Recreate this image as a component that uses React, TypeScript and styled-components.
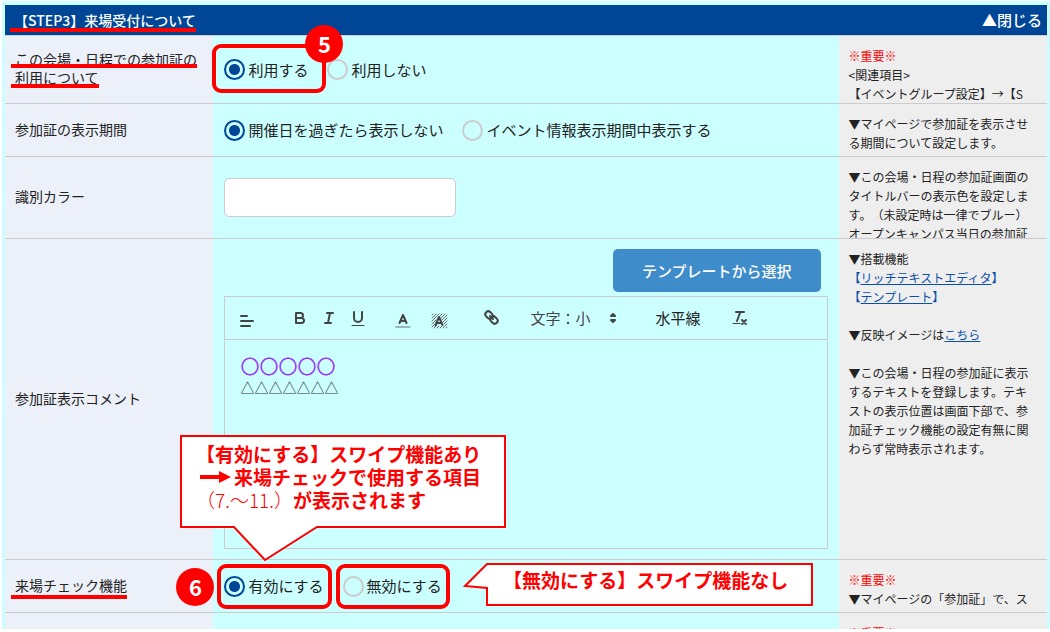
import React from 'react';
import styled, { createGlobalStyle, css } from 'styled-components';

const RED = '#ff0000';
const NAVY = '#004696';
const LINE = '#cccccc';

const GlobalStyle = createGlobalStyle`
  *, *::before, *::after { box-sizing: border-box; }
  body {
    margin: 0;
    background: #fff;
    color: #222;
    font-family: "Noto Sans CJK JP", "Noto Sans", sans-serif;
    text-spacing-trim: space-all;
  }
`;

const Page = styled.main`
  margin: 1px 0 3px 2px;
  padding: 4px 3px 0;
  background: #ccffff;
`;

const StepHeader = styled.header`
  display: flex;
  align-items: center;
  justify-content: space-between;
  height: 31px;
  padding: 0 5px 0 9px;
  background: ${NAVY};
  border-bottom: 1px solid ${LINE};
  color: #fff;
`;

const StepTitle = styled.h2`
  margin: 0;
  font-size: 14px;
  font-weight: 500;
  line-height: 18px;
`;

const CloseButton = styled.button`
  padding: 0;
  border: 0;
  background: none;
  color: #fff;
  font: 500 15px/18px "Noto Sans CJK JP", sans-serif;
`;

const Row = styled.section<{ $size: number }>`
  display: grid;
  grid-template-columns: 20% 60% 20%;
  min-height: ${(p) => p.$size}px;
  border-bottom: 1px solid ${LINE};
`;

const LastRow = styled(Row)`
  border-bottom: 0;
`;

const Label = styled.div`
  display: flex;
  flex-direction: column;
  align-items: flex-start;
  justify-content: center;
  padding: 0 10px 3px;
  background: #ecf0f9;
  font-size: 14px;
  line-height: 18px;
`;

const Field = styled.div`
  display: flex;
  align-items: center;
  gap: 19px;
  padding: 0 11px;
`;

const EditorField = styled.div`
  display: flex;
  flex-direction: column;
  gap: 4px;
  padding: 10px 11px;
`;

const Note = styled.aside`
  contain: size;
  overflow: hidden;
  padding: 10px 10px 0;
  background: #eee;
  font-size: 12px;
  line-height: 19px;

  p { margin: 0; }
  p + p { margin-top: 19px; }
  a { color: #0b4fa8; }
`;

const Important = styled.span`
  color: ${RED};
`;

const LinkBracket = styled.span`
  color: #0b4fa8;
`;

const Underlined = styled.span<{ $drop: number }>`
  position: relative;
  white-space: nowrap;

  &::after {
    content: "";
    position: absolute;
    left: -4px;
    right: 0;
    bottom: -${(p) => p.$drop}px;
    height: 4px;
    background: ${RED};
  }
`;

const Option = styled.label`
  position: relative;
  display: flex;
  align-items: center;
  gap: 3px;
  font-size: 15px;
  line-height: 22px;
  white-space: nowrap;
`;

const Radio = styled.input.attrs({ type: 'radio' })`
  appearance: none;
  width: 21px;
  height: 21px;
  margin: 0;
  border: 2px solid ${LINE};
  border-radius: 50%;

  &:checked {
    border-color: ${NAVY};
    background: radial-gradient(circle, ${NAVY} 5px, transparent 6px);
  }
`;

const Highlight = styled.span<{ $wide?: boolean }>`
  position: absolute;
  border: 4px solid ${RED};
  border-radius: 9px;
  pointer-events: none;
  inset: ${(p) => (p.$wide ? '-15px -18px -12px -12px' : '-11px -8px -12px -7px')};
`;

const badge = css`
  position: absolute;
  display: grid;
  place-items: center;
  width: 38px;
  height: 38px;
  padding-bottom: 2px;
  border-radius: 50%;
  background: ${RED};
  color: #fff;
  font: 700 22px/22px "Noto Sans CJK JP", sans-serif;
`;

const CornerBadge = styled.span`
  ${badge}
  top: -34px;
  right: -35px;
  z-index: 1;
`;

const SideBadge = styled.span`
  ${badge}
  top: -7px;
  left: -48px;
`;

const ColorInput = styled.input`
  width: 232px;
  height: 39px;
  border: 1px solid ${LINE};
  border-radius: 5px;
  background: #fff;
`;

const TemplateButton = styled.button`
  align-self: flex-end;
  height: 43px;
  margin-right: 7px;
  padding: 0 29px;
  border: 0;
  border-radius: 5px;
  background: #3f8ccb;
  color: #fff;
  font: 500 15px/22px "Noto Sans CJK JP", sans-serif;
`;

const Editor = styled.div`
  height: 253px;
  border: 1px solid ${LINE};
`;

const Toolbar = styled.div`
  display: flex;
  align-items: center;
  height: 43px;
  padding: 0 13px;
  border-bottom: 1px solid ${LINE};
`;

const ToolGroup = styled.div<{ $gap?: number; $after: number }>`
  display: flex;
  align-items: center;
  gap: ${(p) => p.$gap ?? 0}px;
  margin-right: ${(p) => p.$after}px;
`;

const Tool = styled.button`
  display: flex;
  align-items: center;
  padding: 0;
  border: 0;
  background: none;
  color: #222;
  font: 400 15px/22px "Noto Sans CJK JP", sans-serif;
`;

const SizeTool = styled(Tool)`
  gap: 14px;
  color: #444;
`;

const Icon = styled.svg.attrs({ width: 18, height: 18, viewBox: '0 0 18 18' })`
  display: block;
  overflow: visible;
  fill: none;
  stroke: #444;
  stroke-width: 2;
  stroke-linecap: round;
  stroke-linejoin: round;
`;

const EditorBody = styled.div`
  padding: 14px 15px;
`;

const Circles = styled.p`
  margin: 0;
  color: #9933ff;
  font-size: 19px;
  line-height: 24px;
`;

const Triangles = styled.p`
  margin: 0;
  color: #333;
  font-size: 14px;
  line-height: 19px;
`;

const Overlay = styled.div`
  position: relative;
  z-index: 1;
  height: 0;
`;

const calloutText = css`
  position: absolute;
  color: ${RED};
  font-size: 19px;
  font-weight: 700;
  line-height: 23px;
  white-space: nowrap;

  p { margin: 0; }
`;

const EnableCallout = styled.div`
  ${calloutText}
  left: 175px;
  top: -125px;
  width: 326px;
  height: 127px;
  padding: 7px 0 0 16px;
`;

const DisableCallout = styled.div`
  ${calloutText}
  left: 456px;
  top: 2px;
  width: 352px;
  height: 44px;
  padding: 6px 0 0 42px;
`;

const Balloon = styled.svg`
  position: absolute;
  inset: 0;
  z-index: -1;
  overflow: visible;
  fill: #fff;
  stroke: ${RED};
  stroke-width: 2;
`;

const ArrowLine = styled.p`
  display: flex;
  align-items: center;
  gap: 3px;
  padding-left: 4px;
`;

const Thin = styled.span`
  font-weight: 300;
`;

function Choice(props: {
  name: string;
  text: string;
  checked?: boolean;
  children?: React.ReactNode;
}) {
  return (
    <Option>
      <Radio name={props.name} defaultChecked={props.checked} />
      {props.text}
      {props.children}
    </Option>
  );
}

export default function App() {
  return (
    <>
      <GlobalStyle />
      <Page>
        <StepHeader>
          <StepTitle>
            <Underlined $drop={2}>【STEP3】来場受付について</Underlined>
          </StepTitle>
          <CloseButton type="button">▲閉じる</CloseButton>
        </StepHeader>

        <Row $size={68}>
          <Label>
            <Underlined $drop={0}>この会場・日程での参加証の</Underlined>
            <Underlined $drop={2}>利用について</Underlined>
          </Label>
          <Field>
            <Choice name="use" text="利用する" checked>
              <Highlight $wide />
              <CornerBadge>5</CornerBadge>
            </Choice>
            <Choice name="use" text="利用しない" />
          </Field>
          <Note>
            <p>
              <Important>※重要※</Important>
              <br />
              &lt;関連項目&gt;
              <br />
              【イベントグループ設定】→【S
            </p>
          </Note>
        </Row>

        <Row $size={53}>
          <Label>参加証の表示期間</Label>
          <Field>
            <Choice name="period" text="開催日を過ぎたら表示しない" checked />
            <Choice name="period" text="イベント情報表示期間中表示する" />
          </Field>
          <Note>
            <p>▼マイページで参加証を表示させる期間について設定します。</p>
          </Note>
        </Row>

        <Row $size={82}>
          <Label as="label" htmlFor="color">識別カラー</Label>
          <Field>
            <ColorInput id="color" type="text" />
          </Field>
          <Note>
            <p>
              ▼この会場・日程の参加証画面のタイトルバーの表示色を設定します。（未設定時は一律でブルー）
              <br />
              オープンキャンパス当日の参加証
            </p>
          </Note>
        </Row>

        <Row $size={321}>
          <Label>参加証表示コメント</Label>
          <EditorField>
            <TemplateButton type="button">テンプレートから選択</TemplateButton>
            <Editor>
              <Toolbar>
                <ToolGroup $after={35}>
                  <Tool type="button" aria-label="配置">
                    <Icon>
                      <path d="M3 7H9M3 12H15M3 17H12" />
                    </Icon>
                  </Tool>
                </ToolGroup>
                <ToolGroup $gap={11} $after={27}>
                  <Tool type="button" aria-label="太字">
                    <Icon>
                      <path d="M5 4H9.5A2.5 2.5 0 0 1 9.5 9H5ZM5 9H10.5A2.5 2.5 0 0 1 10.5 14H5Z" />
                    </Icon>
                  </Tool>
                  <Tool type="button" aria-label="斜体">
                    <Icon>
                      <path d="M7 4H13M5 14H11M8 14L10 4" />
                    </Icon>
                  </Tool>
                  <Tool type="button" aria-label="下線">
                    <Icon>
                      <path d="M5 3V9A4 4 0 0 0 13 9V3" />
                      <path d="M3 16.5H15" strokeWidth="1" />
                    </Icon>
                  </Tool>
                </ToolGroup>
                <ToolGroup $gap={18} $after={34}>
                  <Tool type="button" aria-label="文字色">
                    <Icon>
                      <path d="M5.5 14L9 6L12.5 14M6.6 12H11.4" />
                      <path d="M2 18H16" stroke="#84a4a4" strokeWidth="1.5" />
                    </Icon>
                  </Tool>
                  <Tool type="button" aria-label="背景色">
                    <Icon>
                      <path
                        d="M2 6L3 5M2 9L6 5M2 12L9 5M2 15L6 11M2 18L6 14M4 19L7 16M7 19L9 17M10 19L12 17M9 8L12 5M11 9L15 5M12 11L17 6M13 13L17 9M14 15L17 12M13 19L17 15M16 19L17 18"
                        strokeWidth="0.8"
                      />
                      <path d="M5.5 16L9 8L12.5 16M6.6 14H11.4" />
                    </Icon>
                  </Tool>
                </ToolGroup>
                <ToolGroup $after={30}>
                  <Tool type="button" aria-label="リンク">
                    <Icon>
                      <rect x="3" y="3" width="8" height="6" rx="3" transform="rotate(45 7 6)" />
                      <rect x="8" y="8" width="8" height="6" rx="3" transform="rotate(45 12 11)" />
                      <path d="M8 7L11 10" />
                    </Icon>
                  </Tool>
                </ToolGroup>
                <ToolGroup $gap={33} $after={31}>
                  <SizeTool type="button">
                    文字：小
                    <Icon>
                      <path d="M7 7L9 5L11 7ZM7 11L9 13L11 11Z" fill="#444" />
                    </Icon>
                  </SizeTool>
                  <Tool type="button">水平線</Tool>
                </ToolGroup>
                <Tool type="button" aria-label="書式クリア">
                  <Icon>
                    <path d="M5 3H13M6 12L9.35 3M11 11L15 15M15 11L11 15" />
                    <path d="M2 14.5H9" strokeWidth="1" />
                  </Icon>
                </Tool>
              </Toolbar>
              <EditorBody>
                <Circles>〇〇〇〇〇</Circles>
                <Triangles>△△△△△△△</Triangles>
              </EditorBody>
            </Editor>
          </EditorField>
          <Note>
            <p>
              ▼搭載機能
              <br />
              <LinkBracket>【<a href="#editor">リッチテキストエディタ</a>】</LinkBracket>
              <br />
              <LinkBracket>【<a href="#template">テンプレート</a>】</LinkBracket>
            </p>
            <p>
              ▼反映イメージは<a href="#image">こちら</a>
            </p>
            <p>
              ▼この会場・日程の参加証に表示するテキストを登録します。テキストの表示位置は画面下部で、参加証チェック機能の設定有無に関わらず常時表示されます。
            </p>
          </Note>
        </Row>

        <Overlay>
          <EnableCallout>
            <Balloon width="326" height="127">
              <path d="M1 1H325V92H137L85 125L54 92H1Z" />
            </Balloon>
            <p>【有効にする】スワイプ機能あり</p>
            <ArrowLine>
              <svg width="31" height="12" viewBox="0 0 31 12" fill={RED}>
                <path d="M0 4H19V0L31 6L19 12V8H0Z" />
              </svg>
              来場チェックで使用する項目
            </ArrowLine>
            <p>
              <Thin>（7.～11.）</Thin>が表示されます
            </p>
          </EnableCallout>
          <DisableCallout>
            <Balloon width="352" height="44">
              <path d="M26 2H351V43H26V26L4 24Z" />
            </Balloon>
            <p>【無効にする】スワイプ機能なし</p>
          </DisableCallout>
        </Overlay>

        <Row $size={53}>
          <Label>
            <Underlined $drop={5}>来場チェック機能</Underlined>
          </Label>
          <Field>
            <Choice name="check" text="有効にする" checked>
              <Highlight />
              <SideBadge>6</SideBadge>
            </Choice>
            <Choice name="check" text="無効にする">
              <Highlight />
            </Choice>
          </Field>
          <Note>
            <p>
              <Important>※重要※</Important>
              <br />
              ▼マイページの「参加証」で、ス
            </p>
          </Note>
        </Row>

        <LastRow $size={16}>
          <Label />
          <Field />
          <Note>
            <Important>※重要※</Important>
          </Note>
        </LastRow>
      </Page>
    </>
  );
}
